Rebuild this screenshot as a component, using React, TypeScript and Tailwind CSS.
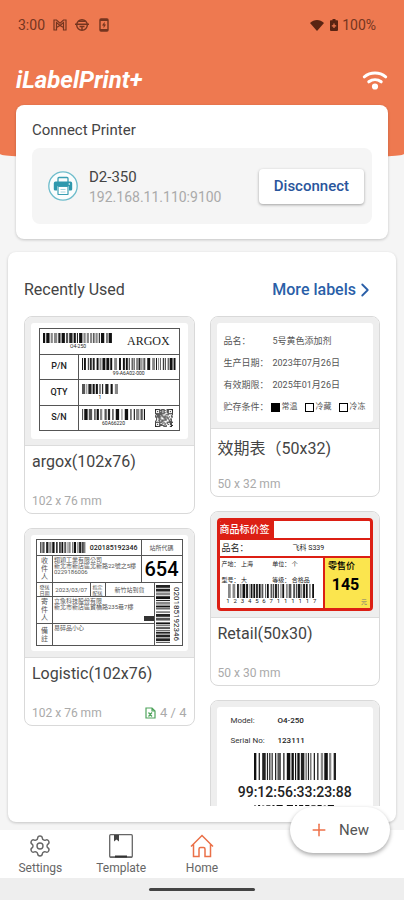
import React from 'react';
import { ChevronRight, Plus, Settings } from 'lucide-react';

type BarcodeProps = { seed: number; modules: number; className: string; vertical?: boolean };

const inks = ['#111', '#222', '#555', '#111', '#888'];

function bars(seed: number, modules: number) {
  const out: { at: number; size: number; ink: string }[] = [];
  let state = seed;
  const next = () => {
    state = (state * 1103515245 + 12345) % 2147483648;
    return (state >> 12) & 1023;
  };
  let at = 0;
  while (at < modules) {
    const size = Math.min(1 + (next() % 3), modules - at);
    out.push({ at, size, ink: inks[next() % inks.length] });
    at += size + (next() % 4 === 0 ? 2 : 1);
  }
  return out;
}

function Barcode({ seed, modules, className, vertical }: BarcodeProps) {
  return (
    <svg
      className={className}
      viewBox={vertical ? `0 0 10 ${modules}` : `0 0 ${modules} 10`}
      preserveAspectRatio="none"
      aria-hidden="true"
    >
      {bars(seed, modules).map((b) =>
        vertical ? (
          <rect key={b.at} x="0" y={b.at} width="10" height={b.size} fill={b.ink} />
        ) : (
          <rect key={b.at} x={b.at} y="0" width={b.size} height="10" fill={b.ink} />
        ),
      )}
    </svg>
  );
}

function QrCode() {
  const n = 17;
  const cells: React.ReactNode[] = [];
  const finder = (x: number, y: number) =>
    x === 0 || y === 0 || x === 4 || y === 4 || (x === 2 && y === 2);
  for (let y = 0; y < n; y++) {
    for (let x = 0; x < n; x++) {
      let on = ((x * 73 + 11) * (y * 37 + 5) * (x + y + 3)) % 101 < 55;
      if (x < 5 && y < 5) on = finder(x, y);
      else if (x > 11 && y < 5) on = finder(x - 12, y);
      else if (x < 5 && y > 11) on = finder(x, y - 12);
      if (on) cells.push(<rect key={`${x}-${y}`} x={x} y={y} width="1" height="1" />);
    }
  }
  return (
    <svg className="size-[18px]" viewBox="0 0 17 17" fill="#222" aria-hidden="true">
      {cells}
    </svg>
  );
}

function StatusBar() {
  return (
    <div className="flex h-[50px] items-center justify-between pr-7 pl-[18px] text-sm text-[#75351f]">
      <div className="flex items-center">
        <span>3:00</span>
        <svg className="ml-2 h-3 w-[14px]" viewBox="0 0 14 12" fill="none" stroke="currentColor" strokeWidth="1.2" aria-hidden="true">
          <path d="M3.5 1H1v10h2.500V3.500L7 6.500l3.500-3V11H13V1h-2.500L7 4.200 3.500 1ZM3.500 8.500 7 6.500l3.500 2" />
        </svg>
        <svg className="ml-2 size-[14px]" viewBox="0 0 14 14" fill="none" stroke="currentColor" strokeWidth="1.400" aria-hidden="true">
          <circle cx="7" cy="7" r="5.300" />
          <path d="M0 6.300h14M4.500 8.500h5M7 8.500v3.500M3.500 3.200h7" />
        </svg>
        <svg className="ml-2.5 h-[14px] w-[10px]" viewBox="0 0 10 14" aria-hidden="true">
          <rect x="1" y="1" width="8" height="12" rx="1" fill="none" stroke="currentColor" strokeWidth="1.400" />
          <path d="M1 2h8M1 12h8" stroke="currentColor" strokeWidth="1.800" />
          <path d="M5.600 3.800 3 7.500h1.600v2.700L7 6.500H5.600V3.800Z" fill="currentColor" />
        </svg>
      </div>
      <div className="flex items-center">
        <svg className="h-[11px] w-[14px]" viewBox="0 0 14 11" fill="#5a2412" aria-hidden="true">
          <path d="M0 3C4 -1 10 -1 14 3L7 11Z" />
        </svg>
        <svg className="ml-[6px] h-3 w-2" viewBox="0 0 8 12" fill="#5a2412" aria-hidden="true">
          <path fillRule="evenodd" d="M2.500 0h3v1.200H7.200q.8 0 .8.800V11q0 1-1 1H1q-1 0-1-1V2q0-.8.8-.8h1.700V0ZM3.400 4.500v1.700H1.800v1.200h1.600v1.700h1.200V7.400h1.600V6.200H4.600V4.500H3.400Z" />
        </svg>
        <span className="ml-1">100%</span>
      </div>
    </div>
  );
}

function PrinterIcon() {
  return (
    <svg className="size-[30px] shrink-0" viewBox="0 0 30 30" fill="none" aria-hidden="true">
      <circle cx="15" cy="15" r="14.200" fill="#fafdfd" stroke="#6dbccb" strokeWidth="1.300" />
      <path d="M10 11V7.500q0-1 1-1h8q1 0 1 1V11" stroke="#3a9fb3" strokeWidth="1.300" />
      <path d="M7.500 10.500h15q1.700 0 1.700 1.700v6q0 1.300-1.300 1.300H21v-4H9v4H7.100q-1.300 0-1.300-1.300v-6q0-1.700 1.700-1.700Z" fill="#2f98ad" />
      <rect x="10" y="15.500" width="10" height="8" rx=".6" fill="#fff" stroke="#3a9fb3" strokeWidth="1.200" />
      <path d="M12.500 18.500h5M12.500 21h5" stroke="#a8d6df" />
      <circle cx="21.300" cy="13" r=".8" fill="#fff" />
    </svg>
  );
}

function ArgoxLabel() {
  const name = 'flex w-[39px] shrink-0 items-center justify-center border-r border-[#555] font-medium';
  return (
    <div className="h-[116px] px-2 pt-[5px]">
      <div className="flex h-[103px] flex-col divide-y divide-[#555] border border-[#555] text-[9px] leading-none text-[#222]">
        <div className="flex flex-1 items-center gap-[14px] px-[3px]">
          <div className="flex w-[70px] shrink-0 flex-col items-center">
            <Barcode seed={17} modules={64} className="h-[10px] w-full" />
            <span className="text-[5px] leading-[6px]">O4-250</span>
          </div>
          <span className="font-['Liberation_Serif',serif] text-xs leading-none">ARGOX</span>
        </div>
        <div className="flex flex-1">
          <span className={name}>P/N</span>
          <div className="flex flex-1 flex-col items-center justify-center px-[3px]">
            <Barcode seed={91} modules={96} className="h-3 w-full" />
            <span className="text-[5px] leading-[6px]">99-A6A02-000</span>
          </div>
        </div>
        <div className="flex flex-1">
          <span className={name}>QTY</span>
          <div className="flex flex-col items-center justify-center px-[3px]">
            <Barcode seed={33} modules={34} className="h-[10px] w-9" />
            <span className="text-[5px] leading-[6px]">1</span>
          </div>
        </div>
        <div className="flex flex-1">
          <span className={name}>S/N</span>
          <div className="flex flex-1 items-center justify-between pr-1.5 pl-[3px]">
            <div className="flex w-[63px] flex-col items-center">
              <Barcode seed={58} modules={56} className="h-[11px] w-full" />
              <span className="text-[5px] leading-[6px]">60A66220</span>
            </div>
            <QrCode />
          </div>
        </div>
      </div>
    </div>
  );
}

function ExpiryLabel() {
  const rows = [
    ['品名：', '5号黄色添加剂'],
    ['生产日期：', '2023年07月26日'],
    ['有效期限：', '2025年01月26日'],
  ];
  return (
    <div className="flex h-[99px] flex-col px-[7px] pt-[7px] text-[9px] leading-[22px] text-[#555]">
      {rows.map(([k, v]) => (
        <div key={k} className="flex">
          <span className="w-[49px] shrink-0">{k}</span>
          <span>{v}</span>
        </div>
      ))}
      <div className="flex items-center">
        <span className="w-[47px] shrink-0 whitespace-nowrap">贮存条件：</span>
        <div className="flex items-center gap-[7px] text-[8px] leading-5">
          <span className="flex items-center gap-0.5">
            <i className="size-[9px] bg-black" />
            常温
          </span>
          <span className="flex items-center gap-0.5">
            <i className="size-[9px] border-[1.5px] border-black" />
            冷藏
          </span>
          <span className="flex items-center gap-0.5">
            <i className="size-[9px] border-[1.5px] border-black" />
            冷冻
          </span>
        </div>
      </div>
    </div>
  );
}

function LogisticLabel() {
  const side = 'flex w-4 shrink-0 flex-col items-center justify-center border-r border-[#555] text-[7px] leading-[8px]';
  return (
    <div className="h-[116px] px-[5px] pt-1">
      <div className="flex h-[107px] flex-col border border-[#555] font-['Roboto','Noto_Sans_CJK_TC',sans-serif] text-[6px] leading-[6px] text-[#555]">
        <div className="flex h-4 shrink-0 border-b border-[#555]">
          <div className="flex flex-1 items-center justify-between px-[3px]">
            <Barcode seed={77} modules={60} className="h-[11px] w-[46px]" />
            <span className="text-[7px] font-medium text-[#222]">020185192346</span>
          </div>
          <div className="flex w-[41px] items-center justify-center border-l border-[#555]">站所代碼</div>
        </div>
        <div className="flex h-[27px] shrink-0 border-b border-[#555]">
          <div className={side}>
            <span>收</span>
            <span>件</span>
            <span>人</span>
          </div>
          <div className="flex-1 pt-px pl-px whitespace-nowrap">
            <p>翔穎工業有限公司</p>
            <p>新北市新店區北新路22號之5樓</p>
            <p>0229186006</p>
          </div>
          <div className="flex w-[41px] items-center justify-center border-l border-[#555] text-[20px] font-medium text-black">
            654
          </div>
        </div>
        <div className="flex flex-1">
          <div className="flex min-w-0 flex-1 flex-col border-r border-[#555]">
            <div className="flex h-[14px] shrink-0 border-b border-[#555]">
              <div className="flex w-4 shrink-0 flex-col items-center justify-center border-r border-[#555] text-[5px]">
                <span>發送</span>
                <span>日期</span>
              </div>
              <div className="flex flex-1 items-center justify-center">2023/03/07</div>
              <div className="flex w-4 flex-col items-center justify-center border-x border-[#555] text-[5px]">
                <span>指定</span>
                <span>配送</span>
              </div>
              <div className="flex w-12 items-center justify-center">新竹站到貨</div>
            </div>
            <div className="flex h-[27px] shrink-0 border-b border-[#555]">
              <div className={side}>
                <span>寄</span>
                <span>件</span>
                <span>人</span>
              </div>
              <div className="flex min-w-0 flex-1 flex-col pt-px pl-px whitespace-nowrap">
                <p>立象科技股份有限</p>
                <p>新北市新店區寶橋路235巷7樓</p>
                <span className="mt-auto mb-0.5 h-[5px] w-[10px] self-end bg-[#333]" />
              </div>
            </div>
            <div className="flex flex-1">
              <div className={side}>
                <span>備</span>
                <span>註</span>
              </div>
              <p className="pt-px pl-px">易碎品小心</p>
            </div>
          </div>
          <div className="flex w-[27px] items-center gap-px pl-px">
            <Barcode seed={29} modules={62} vertical className="h-[58px] w-[14px]" />
            <span className="text-[8px] leading-[10px] text-[#222] [writing-mode:vertical-rl]">020185192346</span>
          </div>
        </div>
      </div>
    </div>
  );
}

function RetailLabel() {
  return (
    <div className="flex h-[93px] flex-col overflow-hidden rounded border-[3px] border-[#dc1f14] text-[6px] leading-[8px] text-[#222]">
      <div className="flex h-[19px] shrink-0 border-b-2 border-[#dc1f14]">
        <span className="flex w-[54px] items-center bg-[#dc1f14] text-[10px] font-medium whitespace-nowrap text-white">商品标价签</span>
      </div>
      <div className="flex h-[18px] shrink-0 items-center border-b-2 border-[#dc1f14] pl-0.5 text-[9px]">
        <span className="w-[71px]">品名：</span>
        <span className="text-[7px]">飞科 S339</span>
      </div>
      <div className="flex flex-1">
        <div className="flex flex-1 flex-col items-center pt-0.5">
          <div className="grid w-full grid-cols-2 gap-y-2 pl-0.5">
            <span>产地： 上海</span>
            <span>单位： 个</span>
            <span>型号： 大</span>
            <span>等级： 合格品</span>
          </div>
          <Barcode seed={43} modules={95} className="h-[14px] w-[86px]" />
          <div className="flex w-[90px] justify-between text-[6px] leading-[6px]">
            {'1234567111117'.split('').map((d, i) => (
              <span key={i}>{d}</span>
            ))}
          </div>
        </div>
        <div className="flex w-[47px] flex-col border-l-2 border-[#dc1f14] bg-[#fbe54e] px-[3px] text-black">
          <span className="pt-[3px] text-[9px] leading-[10px] font-medium">零售价</span>
          <span className="pr-1 text-center text-base leading-7 font-bold">145</span>
          <span className="text-right leading-[6px] text-[#777]">元</span>
        </div>
      </div>
    </div>
  );
}

function ModelLabel() {
  return (
    <div className="flex h-[117px] flex-col items-center overflow-hidden text-[8px] leading-5 text-[#333]">
      <dl className="grid w-full grid-cols-[47px_1fr] pt-1 pl-[14px]">
        <dt>Model:</dt>
        <dd className="font-medium text-[#222]">O4-250</dd>
        <dt>Serial No:</dt>
        <dd className="font-medium text-[#222]">123111</dd>
      </dl>
      <Barcode seed={64} modules={70} className="mt-0.5 h-[27px] w-[82px] shrink-0" />
      <p className="pt-0.5 text-sm leading-5 font-medium text-[#222]">99:12:56:33:23:88</p>
      <Barcode seed={12} modules={40} className="mt-[3px] h-4 w-[82px] shrink-0" />
    </div>
  );
}

type CardProps = { title?: string; size?: string; count?: string; tall?: boolean; children: React.ReactNode };

function LabelCard({ title, size, count, tall, children }: CardProps) {
  return (
    <article className="shrink-0 overflow-hidden rounded-lg border border-[#d9d9d9] bg-white">
      <div className="border-b border-[#dcdcdc] bg-[#eeeeee] p-1.5">
        <div className="rounded-[3px] bg-white">{children}</div>
      </div>
      {title && (
        <div className="flex h-[67px] flex-col px-[7px] pt-1.5 pb-1">
          <h3 className={tall ? 'text-base leading-7 text-[#444]' : 'text-base leading-5 text-[#444]'}>{title}</h3>
          <div className="mt-auto flex items-center justify-between text-[#aaaaaa]">
            <span className="text-xs">{size}</span>
            {count && (
              <span className="flex items-center gap-1 text-[13px] leading-4">
                <svg className="h-3 w-[11px]" viewBox="0 0 11 12" fill="none" stroke="#4fa45c" strokeWidth="1.200" aria-hidden="true">
                  <path d="M1 1h6l3 3v7H1ZM7 1v3h3M3.500 5.500l3.500 4M7 5.500l-3.500 4" />
                </svg>
                {count}
              </span>
            )}
          </div>
        </div>
      )}
    </article>
  );
}

const navItem = 'flex flex-col items-center gap-0.5 pt-1 text-xs text-[#666]';

export default function App() {
  return (
    <div className="flex h-screen flex-col overflow-hidden bg-[#f5f5f5] font-['Roboto','Noto_Sans_CJK_SC',sans-serif] text-[#444]">
      <header className="shrink-0 rounded-b-[50%_6px] bg-[#ee7950] pb-[50px]">
        <StatusBar />
        <div className="flex h-[60px] items-center justify-between px-4">
          <h1 className="text-2xl font-bold text-white italic">iLabelPrint+</h1>
          <svg className="h-[19px] w-[26px]" viewBox="0 0 26 19" fill="none" stroke="#fff" strokeWidth="3" strokeLinecap="round" role="img" aria-label="Wi-Fi">
            <path d="M2.300 5.800C8.500 .8 17.500 .8 23.700 5.800M6.800 10.800c3.700-2.900 8.700-2.900 12.400 0" />
            <circle cx="13" cy="15.500" r="1.600" fill="#fff" />
          </svg>
        </div>
      </header>

      <main className="-mt-[55px] flex min-h-0 flex-1 flex-col gap-[13px] pb-2">
        <section className="mx-4 shrink-0 rounded-lg bg-white px-4 pt-[15px] pb-[15px] shadow-[0_1px_3px_rgba(0,0,0,0.2)]">
          <h2 className="text-[15px] leading-5">Connect Printer</h2>
          <div className="mt-2 flex h-[76px] items-center rounded-lg bg-[#f5f5f5] pr-2 pl-4">
            <PrinterIcon />
            <div className="ml-[11px] flex-1">
              <p className="pt-0.5 text-[15px] leading-5">D2-350</p>
              <p className="text-sm leading-5 text-[#aaaaaa]">192.168.11.110:9100</p>
            </div>
            <button
              type="button"
              className="h-[35px] rounded bg-white px-[15px] text-[15px] font-medium text-[#2a559c] shadow-[0_1px_3px_rgba(0,0,0,0.35)]"
            >
              Disconnect
            </button>
          </div>
        </section>

        <section className="mx-2 flex min-h-0 flex-1 flex-col rounded-lg bg-white px-4 pb-4 shadow-[0_1px_3px_rgba(0,0,0,0.2)]">
          <div className="flex h-16 shrink-0 items-center justify-between pt-3 pr-1">
            <h2 className="text-base">Recently Used</h2>
            <a href="#labels" className="flex items-center text-base font-medium text-[#2a5fa8]">
              More labels
              <ChevronRight className="-ml-0.5 size-[22px]" strokeWidth={2} aria-hidden="true" />
            </a>
          </div>
          <div className="grid min-h-0 flex-1 grid-cols-2 gap-[15px] overflow-hidden">
            <div className="flex flex-col gap-[14px]">
              <LabelCard title="argox(102x76)" size="102 x 76 mm">
                <ArgoxLabel />
              </LabelCard>
              <LabelCard title="Logistic(102x76)" size="102 x 76 mm" count="4 / 4">
                <LogisticLabel />
              </LabelCard>
            </div>
            <div className="flex flex-col gap-[14px]">
              <LabelCard title="效期表（50x32)" size="50 x 32 mm" tall>
                <ExpiryLabel />
              </LabelCard>
              <LabelCard title="Retail(50x30)" size="50 x 30 mm">
                <RetailLabel />
              </LabelCard>
              <LabelCard>
                <ModelLabel />
              </LabelCard>
            </div>
          </div>
        </section>
      </main>

      <nav className="relative grid h-12 shrink-0 grid-cols-5 bg-white">
        <a href="#settings" className={navItem}>
          <Settings className="size-6" strokeWidth={1.4} aria-hidden="true" />
          Settings
        </a>
        <a href="#template" className={navItem}>
          <svg className="size-6" viewBox="0 0 24 24" fill="none" stroke="#666" strokeWidth="1.300" aria-hidden="true">
            <rect x="0.700" y="0.700" width="22.600" height="22.600" rx="1" />
            <path d="M5 1v6.500l2.500-2 2.500 2V1Z" fill="#444" stroke="none" />
            <path d="M1 23h22" strokeWidth="1.400" />
            <path d="M6 22.500h12" stroke="#333" strokeWidth="2" />
          </svg>
          Template
        </a>
        <a href="#home" aria-current="page" className={navItem}>
          <svg className="size-6" viewBox="0 0 24 24" fill="none" stroke="#ea7048" strokeWidth="1.500" aria-hidden="true">
            <path d="M1 12.500 12 1.500l11 11M3.500 10.500v12H9V15q0-1.500 1.500-1.500h3Q15 13.500 15 15v7.500h5.500v-12" />
          </svg>
          Home
        </a>
        <button
          type="button"
          className="absolute -top-[23px] right-[14px] flex h-[46px] items-center gap-[10px] rounded-full bg-white pr-[21px] pl-[19px] text-[15px] text-[#555] shadow-[0_2px_4px_rgba(0,0,0,0.35)]"
        >
          <Plus className="size-5 text-[#ee7048]" strokeWidth={1.8} aria-hidden="true" />
          New
        </button>
      </nav>
      <div className="flex h-[22px] shrink-0 items-center justify-center bg-[#eeeeee]">
        <span className="h-[3px] w-[106px] rounded-full bg-[#444]" />
      </div>
    </div>
  );
}
